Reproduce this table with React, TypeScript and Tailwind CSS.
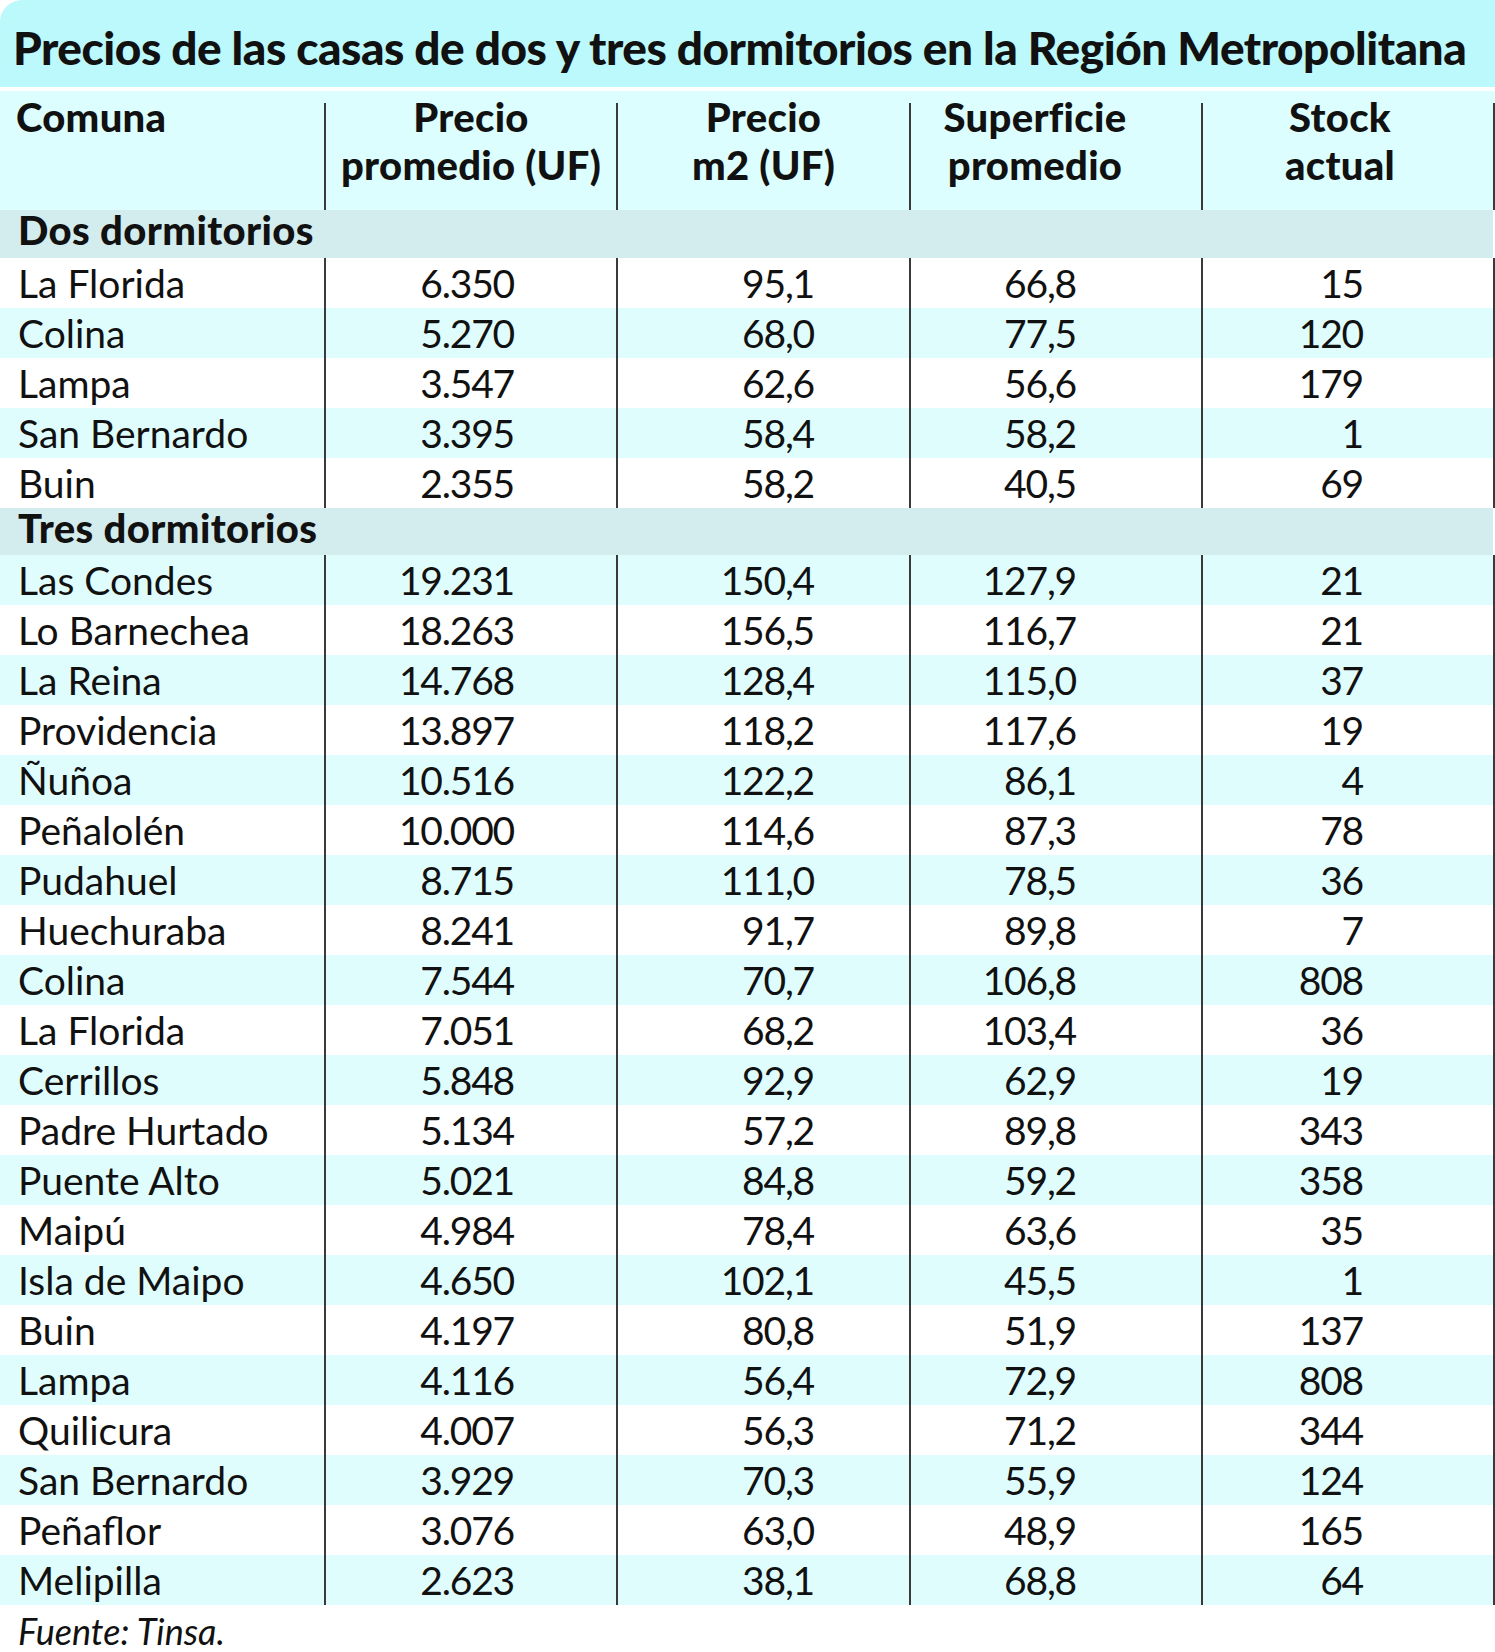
const FONT = { fontFamily: 'Lato, "Open Sans", "Liberation Sans", sans-serif' };

type Row = [string, string, string, string, string];

const dos: Row[] = [
  ['La Florida', '6.350', '95,1', '66,8', '15'],
  ['Colina', '5.270', '68,0', '77,5', '120'],
  ['Lampa', '3.547', '62,6', '56,6', '179'],
  ['San Bernardo', '3.395', '58,4', '58,2', '1'],
  ['Buin', '2.355', '58,2', '40,5', '69'],
];

const tres: Row[] = [
  ['Las Condes', '19.231', '150,4', '127,9', '21'],
  ['Lo Barnechea', '18.263', '156,5', '116,7', '21'],
  ['La Reina', '14.768', '128,4', '115,0', '37'],
  ['Providencia', '13.897', '118,2', '117,6', '19'],
  ['Ñuñoa', '10.516', '122,2', '86,1', '4'],
  ['Peñalolén', '10.000', '114,6', '87,3', '78'],
  ['Pudahuel', '8.715', '111,0', '78,5', '36'],
  ['Huechuraba', '8.241', '91,7', '89,8', '7'],
  ['Colina', '7.544', '70,7', '106,8', '808'],
  ['La Florida', '7.051', '68,2', '103,4', '36'],
  ['Cerrillos', '5.848', '92,9', '62,9', '19'],
  ['Padre Hurtado', '5.134', '57,2', '89,8', '343'],
  ['Puente Alto', '5.021', '84,8', '59,2', '358'],
  ['Maipú', '4.984', '78,4', '63,6', '35'],
  ['Isla de Maipo', '4.650', '102,1', '45,5', '1'],
  ['Buin', '4.197', '80,8', '51,9', '137'],
  ['Lampa', '4.116', '56,4', '72,9', '808'],
  ['Quilicura', '4.007', '56,3', '71,2', '344'],
  ['San Bernardo', '3.929', '70,3', '55,9', '124'],
  ['Peñaflor', '3.076', '63,0', '48,9', '165'],
  ['Melipilla', '2.623', '38,1', '68,8', '64'],
];

function DataRow({ row, shaded }: { row: Row; shaded: boolean }) {
  const [comuna, precio, m2, sup, stock] = row;
  return (
    <div
      className={`flex h-[50px] border-r-2 border-[#3a3a3a] text-[39px] leading-[50px] ${
        shaded ? 'bg-[#e0fdfe]' : 'bg-white'
      }`}
    >
      <div className="w-[324px] pl-[18px] whitespace-nowrap">{comuna}</div>
      <div className="w-[292px] border-l-2 border-[#3a3a3a] pr-[102px] text-right tracking-[-1.2px]">{precio}</div>
      <div className="w-[293px] border-l-2 border-[#3a3a3a] pr-[95px] text-right tracking-[-1.2px]">{m2}</div>
      <div className="w-[292px] border-l-2 border-[#3a3a3a] pr-[125px] text-right tracking-[-1.2px]">{sup}</div>
      <div className="w-[292px] border-l-2 border-[#3a3a3a] pr-[130px] text-right tracking-[-1.2px]">{stock}</div>
    </div>
  );
}

function SectionRow({ label }: { label: string }) {
  return (
    <div className="flex h-[47.5px] w-[1493px] bg-[#d3ecee] pl-[18px] text-[40px] font-black leading-[40px] tracking-[0.4px]">
      {label}
    </div>
  );
}

export default function App() {
  let idx = 0;
  return (
    <div className="w-[1495px] bg-white text-[#111]" style={FONT}>
      {/* Title band */}
      <div className="h-[87px] rounded-tl-[22px] bg-[#bcf9fc] pl-[13px] pt-[20px] text-[46px] font-black leading-[55px] tracking-[-0.48px] whitespace-nowrap">
        Precios de las casas de dos y tres dormitorios en la Región Metropolitana
      </div>

      <div className="mt-[4px] bg-[#dcfefe] pt-[12px]">
        <div className="flex h-[107px] border-r-2 border-[#3a3a3a] text-[40px] font-black leading-[48px] tracking-[0.3px]">
          <div className="w-[324px] pl-[16px]">
            <div className="-mt-[10px]">Comuna</div>
          </div>
          <div className="w-[292px] border-l-2 border-[#3a3a3a] text-center">
            <div className="-mt-[10px]">
              Precio
              <br />
              promedio (UF)
            </div>
          </div>
          <div className="w-[293px] border-l-2 border-[#3a3a3a] text-center">
            <div className="-mt-[10px]">
              Precio
              <br />
              m2 (UF)
            </div>
          </div>
          <div className="w-[292px] border-l-2 border-[#3a3a3a] pr-[42px] text-center">
            <div className="-mt-[10px]">
              Superficie
              <br />
              promedio
            </div>
          </div>
          <div className="w-[292px] border-l-2 border-[#3a3a3a] pr-[16px] text-center">
            <div className="-mt-[10px]">
              Stock
              <br />
              actual
            </div>
          </div>
        </div>
      </div>

      <SectionRow label="Dos dormitorios" />
      {dos.map((r) => {
        const shaded = idx++ % 2 === 1;
        return <DataRow key={'d' + r[0]} row={r} shaded={shaded} />;
      })}
      <SectionRow label="Tres dormitorios" />
      {tres.map((r) => {
        const shaded = idx++ % 2 === 1;
        return <DataRow key={'t' + r[0]} row={r} shaded={shaded} />;
      })}

      <div className="h-[46px] pl-[18px] pt-[6px] text-[36px] italic leading-[41px]">Fuente: Tinsa.</div>
    </div>
  );
}
